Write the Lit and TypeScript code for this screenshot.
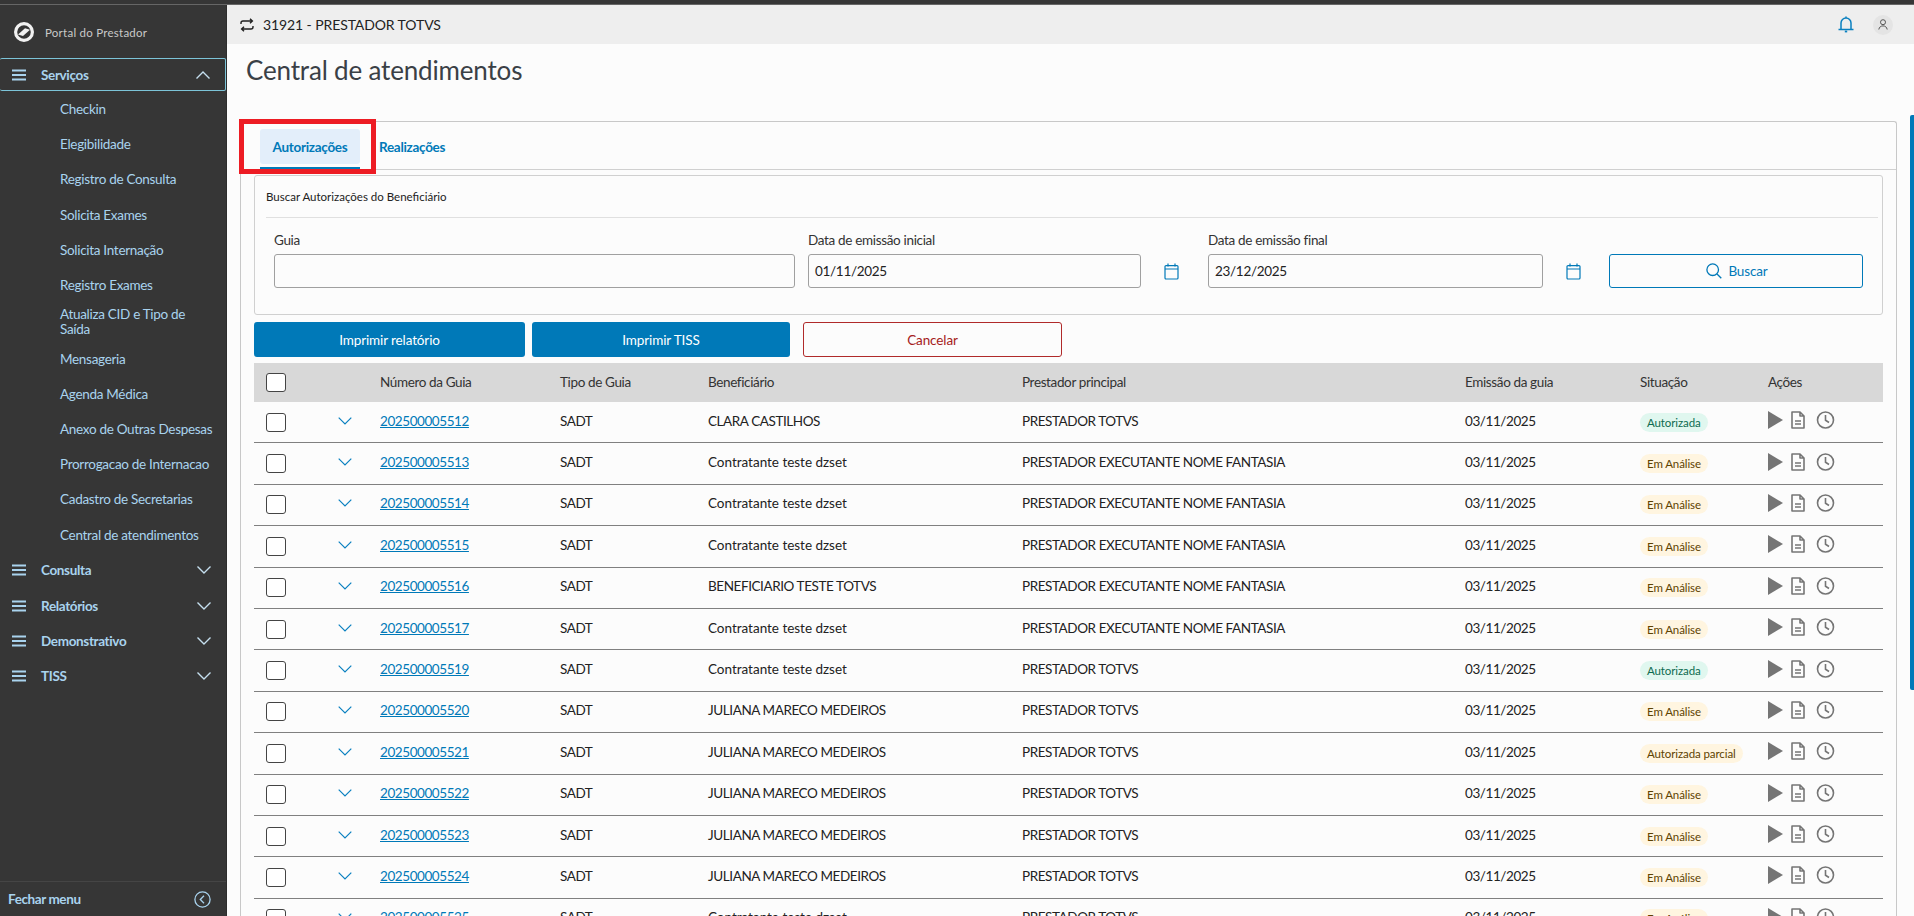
import { LitElement, html, css, svg } from "lit";
import { customElement } from "lit/decorators.js";

const EXEC = "PRESTADOR EXECUTANTE NOME FANTASIA";
const PT = "PRESTADOR TOTVS";
const CT = "Contratante teste dzset";
const JM = "JULIANA MARECO MEDEIROS";
const AU = "Autorizada";
const EA = "Em Análise";
const rows: [string, string, string, string][] = [
  ["202500005512", "CLARA CASTILHOS", PT, AU],
  ["202500005513", CT, EXEC, EA],
  ["202500005514", CT, EXEC, EA],
  ["202500005515", CT, EXEC, EA],
  ["202500005516", "BENEFICIARIO TESTE TOTVS", EXEC, EA],
  ["202500005517", CT, EXEC, EA],
  ["202500005519", CT, PT, AU],
  ["202500005520", JM, PT, EA],
  ["202500005521", JM, PT, "Autorizada parcial"],
  ["202500005522", JM, PT, EA],
  ["202500005523", JM, PT, EA],
  ["202500005524", JM, PT, EA],
  ["202500005525", CT, PT, EA],
];
const subs = ["Checkin", "Elegibilidade", "Registro de Consulta", "Solicita Exames", "Solicita Internação", "Registro Exames", "Atualiza CID e Tipo de Saída", "Mensageria", "Agenda Médica", "Anexo de Outras Despesas", "Prorrogacao de Internacao", "Cadastro de Secretarias", "Central de atendimentos"];

const burger = html`<svg class="burger" width="14" height="12" viewBox="0 0 14 12"><path d="M0 1.5h14M0 6h14M0 10.5h14" stroke="currentColor" stroke-width="2" fill="none"/></svg>`;
const chev = (up = false) => html`<svg class="chev" width="16" height="10" viewBox="0 0 16 10"><path d="${up ? "M1.5 8.5L8 2l6.5 6.5" : "M1.5 1.5L8 8l6.5-6.5"}" stroke="currentColor" stroke-width="1.4" fill="none"/></svg>`;
const rowChev = html`<svg class="rchev" width="14" height="8" viewBox="0 0 14 8"><path d="M.7.7L7 7l6.3-6.3" stroke="currentColor" stroke-width="1.2" fill="none"/></svg>`;
const calendar = html`<svg width="15" height="17" viewBox="0 0 15 17" fill="none" stroke="#0079b8" stroke-width="1.2"><rect x="1" y="2.6" width="13" height="13.4" rx="1"/><path d="M1 6h13M4 .5v3M11 .5v3"/></svg>`;
const playIcon = svg`<path d="M0 0L15 9L0 18Z" fill="#757575"/>`;

@customElement("app-root")
export class AppRoot extends LitElement {
  static styles = css`
    :host { display: block; width: 1914px; height: 916px; overflow: hidden; font-family: Lato, "Open Sans", sans-serif; background: #fcfcfc; color: #222; font-size: 14px; }
    * { box-sizing: border-box; }
    .topline { height: 5px; background: #363636; border-bottom: 1px solid #666; }
    .shell { display: grid; grid-template-columns: 227px 1fr; height: 911px; }
    .side { background: #363636; display: flex; flex-direction: column; color: #a9d3ee; position: relative; border-right: 1px solid #2d2d2d; }
    .brand { height: 53px; display: flex; align-items: center; gap: 11px; padding: 1px 0 0 14px; color: #c9c9c9; font-size: 11.5px; font-weight: 400; letter-spacing: .25px; }
    .group { display: flex; align-items: center; height: 35.3px; padding-left: 12px; padding-right: 14px; font-weight: 700; font-size: 13.5px; letter-spacing: -.35px; color: #a9d3ee; gap: 15px; }
    .group span { flex: 1; }
    .group.open { height: 33px; margin-bottom: 1px; border: 1px solid #7cc4d8; border-left: 0; border-radius: 2px; color: #a9d3ee; }
    .chev { color: #c5dfef; }
    .sub { height: 35.2px; padding-left: 60px; padding-right: 12px; display: flex; align-items: center; font-size: 13.5px; line-height: 15px; letter-spacing: -.3px; }
    .sub:nth-child(7) { height: 38.5px; }
    .subs { display: flex; flex-direction: column; }
    .close { margin-top: auto; height: 35px; border-top: 1px solid #454545; display: flex; align-items: center; justify-content: space-between; padding: 0 15px 0 8px; font-weight: 700; font-size: 13.5px; letter-spacing: -.4px; }
    .main { position: relative; overflow: hidden; }
    .bar { height: 39px; background: #eeeeee; display: flex; align-items: center; padding: 0 21px 0 13px; gap: 9px; font-size: 14px; letter-spacing: -.1px; color: #222; }
    .bar .name { flex: 1; }
    .avatar { width: 20px; height: 20px; border-radius: 50%; background: #e4e4e4; display: flex; align-items: center; justify-content: center; margin-left: 10px; }
    h1 { margin: 0; font-size: 26px; letter-spacing: -.17px; font-weight: 400; color: #3a4046; height: 77px; padding: 7px 0 0 19px; line-height: 38px; }
    .card { margin-left: 13px; width: 1657px; border: 1px solid #c8c8c8; border-radius: 3px 3px 0 0; border-bottom: 0; padding: 0 13px; height: 900px; }
    .tabs { height: 48px; margin: 0 -13px; padding: 7px 0 0 19px; border-bottom: 1px solid #d0d0d0; display: flex; align-items: flex-start; font-weight: 700; font-size: 13.5px; letter-spacing: -.3px; color: #0079b8; }
    .tab { width: 100px; display: flex; flex-direction: column; align-items: stretch; }
    .tab b { display: flex; height: 35px; background: #e3eefa; border-radius: 3px; align-items: center; justify-content: center; font-weight: 700; }
    .tab i { display: block; height: 2px; margin-top: 3px; background: #0079b8; }
    .tab2 { height: 35px; display: flex; align-items: center; margin-left: 19px; }
    .filter { margin-top: 5px; height: 140px; border: 1px solid #d0d0d0; border-radius: 3px; }
    .ftitle { margin-left: 11px; height: 42px; width: 1612px; border-bottom: 1px solid #e0e0e0; display: flex; align-items: center; font-size: 11.5px; color: #222; }
    .fields { display: grid; grid-template-columns: 534px 333px 67px 335px 66px 254px; padding: 13px 0 0 19px; }
    .fld label { display: block; height: 23px; font-size: 13.5px; line-height: 18px; color: #333; letter-spacing: -.33px; }
    .inp { height: 34px; border: 1px solid #a0a0a0; border-radius: 3px; display: flex; align-items: center; padding-left: 6px; font-size: 13.5px; color: #222; letter-spacing: -.3px; }
    .w521 { width: 521px; }
    .calc { padding-top: 23px; display: flex; align-items: center; height: 57px; padding-left: 23px; }
    .bwrap { padding-top: 23px; }
    .buscar { height: 34px; border: 1px solid #0079b8; border-radius: 3px; display: flex; align-items: center; justify-content: center; gap: 6px; color: #0079b8; font-size: 13.5px; letter-spacing: -.15px; padding-left: 2px; }
    .actions { display: flex; margin-top: 7px; height: 35px; }
    .btn { height: 35px; border-radius: 3px; display: flex; align-items: center; justify-content: center; font-size: 13.5px; letter-spacing: -.12px; }
    .pri { background: #0079b8; color: #fff; }
    .dan { border: 1px solid #b02a2a; color: #a52020; width: 259px; margin-left: 13px; }
    .b1 { width: 271px; margin-right: 7px; }
    .b2 { width: 258px; }
    .table { margin-top: 6px; width: 1629px; }
    .row { display: grid; grid-template-columns: 60px 66px 180px 148px 314px 443px 175px 128px 115px; align-items: center; height: 41.4px; border-bottom: 1px solid #808080; font-size: 13.5px; color: #222; letter-spacing: -.42px; }
    .row > div { white-space: nowrap; padding-bottom: 3px; }
    .head { height: 39px; background: #d8d8d8; border: 0; color: #333; letter-spacing: -.37px; }
    .head > div { padding-bottom: 2px; }
    .check { width: 20px; height: 19px; border: 1px solid #444; border-radius: 3px; margin-left: 12px; background: #fff; }
    .row > div.chk { padding-bottom: 0; }
    .chevc { padding-left: 24px; display: flex; color: #0a80c0; }
    .lc { letter-spacing: -.02px; }
    a { color: #0079b8; text-decoration: underline; }
    .badge { display: inline-flex; align-items: center; height: 19px; padding: 0 7px; border-radius: 10px; font-size: 11.5px; margin-top: 3px; letter-spacing: -.1px; }
    .ok { background: #e0f7ef; color: #0d6b50; }
    .wait { background: #fff5e0; color: #5e4300; }
    .row > div.icons { display: flex; align-items: center; gap: 8px; padding-bottom: 4px; }
    .clock { margin-left: 3px; }
    .flag { position: absolute; left: 12px; top: 114px; width: 137px; height: 55px; border: 5px solid #ed1c24; pointer-events: none; }
    .scroll { position: absolute; right: 0; top: 110px; width: 4px; height: 575px; background: #0079b8; border-radius: 2px 0 0 2px; }
  `;

  render() {
    return html`
      <div class="topline"></div>
      <div class="shell">
        <aside class="side">
          <div class="brand">
            <svg width="20" height="20" viewBox="0 0 20 20"><circle cx="10" cy="10" r="8.4" fill="none" stroke="#f2f2f2" stroke-width="3.2"/><path d="M4 12.5L11 6.2l5 1.6L9 14z" fill="#f2f2f2"/></svg>
            <span>Portal do Prestador</span>
          </div>
          <div class="group open">${burger}<span>Serviços</span>${chev(true)}</div>
          <div class="subs">${subs.map((s) => html`<div class="sub">${s}</div>`)}</div>
          ${["Consulta", "Relatórios", "Demonstrativo", "TISS"].map((g) => html`<div class="group">${burger}<span>${g}</span>${chev()}</div>`)}
          <div class="close"><span>Fechar menu</span>
            <svg width="17" height="17" viewBox="0 0 17 17" fill="none" stroke="#a9d3ee" stroke-width="1.3"><circle cx="8.5" cy="8.5" r="7.6"/><path d="M10 4.8L6.3 8.5l3.7 3.7"/></svg>
          </div>
        </aside>
        <main class="main">
          <div class="bar">
            <svg width="14" height="14" viewBox="0 0 14 14" fill="none" stroke="#222" stroke-width="1.4"><path d="M1 6V5a2 2 0 0 1 2-2h9M10 .7L12.4 3 10 5.3M13 8v1a2 2 0 0 1-2 2H2M4 8.7L1.6 11 4 13.3"/></svg>
            <span class="name">31921 - PRESTADOR TOTVS</span>
            <svg width="16" height="17" viewBox="0 0 16 17" fill="none" stroke="#0a80c0" stroke-width="1.5"><path d="M3 13V7a5 5 0 0 1 10 0v6M.5 13.5h15M8 .5v1.5"/><path d="M6.8 15.5h2.4" stroke-width="1.8"/></svg>
            <span class="avatar"><svg width="10" height="11" viewBox="0 0 10 11" fill="none" stroke="#555" stroke-width="1"><circle cx="5" cy="3.2" r="2.5"/><path d="M.8 10.5c.4-2.4 2-3.6 4.2-3.6s3.8 1.2 4.2 3.6"/></svg></span>
          </div>
          <h1>Central de atendimentos</h1>
          <section class="card">
            <div class="tabs">
              <div class="tab"><b>Autorizações</b><i></i></div>
              <div class="tab2">Realizações</div>
            </div>
            <div class="filter">
              <div class="ftitle">Buscar Autorizações do Beneficiário</div>
              <div class="fields">
                <div class="fld"><label>Guia</label><div class="inp w521"></div></div>
                <div class="fld"><label>Data de emissão inicial</label><div class="inp">01/11/2025</div></div>
                <div class="calc">${calendar}</div>
                <div class="fld"><label>Data de emissão final</label><div class="inp">23/12/2025</div></div>
                <div class="calc">${calendar}</div>
                <div class="bwrap"><div class="buscar">
                  <svg width="16" height="16" viewBox="0 0 16 16" fill="none" stroke="#0079b8" stroke-width="1.3"><circle cx="6.7" cy="6.7" r="5.8"/><path d="M11 11l4.3 4.3"/></svg>
                  Buscar</div></div>
              </div>
            </div>
            <div class="actions">
              <div class="btn pri b1">Imprimir relatório</div>
              <div class="btn pri b2">Imprimir TISS</div>
              <div class="btn dan">Cancelar</div>
            </div>
            <div class="table">
              <div class="row head">
                <div class="chk"><div class="check"></div></div><div></div>
                <div>Número da Guia</div><div>Tipo de Guia</div><div>Beneficiário</div><div>Prestador principal</div><div>Emissão da guia</div><div>Situação</div><div>Ações</div>
              </div>
              ${rows.map((r) => html`
                <div class="row">
                  <div class="chk"><div class="check"></div></div>
                  <div class="chevc">${rowChev}</div>
                  <div><a>${r[0]}</a></div>
                  <div>SADT</div>
                  <div class="${r[1] === CT ? "lc" : ""}">${r[1]}</div>
                  <div>${r[2]}</div>
                  <div>03/11/2025</div>
                  <div><span class="badge ${r[3] === AU ? "ok" : "wait"}">${r[3]}</span></div>
                  <div class="icons">
                    <svg width="15" height="18" viewBox="0 0 15 18">${playIcon}</svg>
                    <svg width="14" height="18" viewBox="0 0 14 18" fill="none" stroke="#757575" stroke-width="1.6" stroke-linejoin="round"><path d="M1 1h8l4 4v12H1zM9 1v4h4"/><path d="M4 10h6M4 13h6"/></svg>
                    <svg class="clock" width="19" height="18" viewBox="0 0 19 18" fill="none" stroke="#757575" stroke-width="1.6"><circle cx="9.5" cy="9" r="8"/><path d="M9.5 4v5.2l3.5 2.3"/></svg>
                  </div>
                </div>`)}
            </div>
          </section>
          <div class="flag"></div>
          <div class="scroll"></div>
        </main>
      </div>
    `;
  }
}
